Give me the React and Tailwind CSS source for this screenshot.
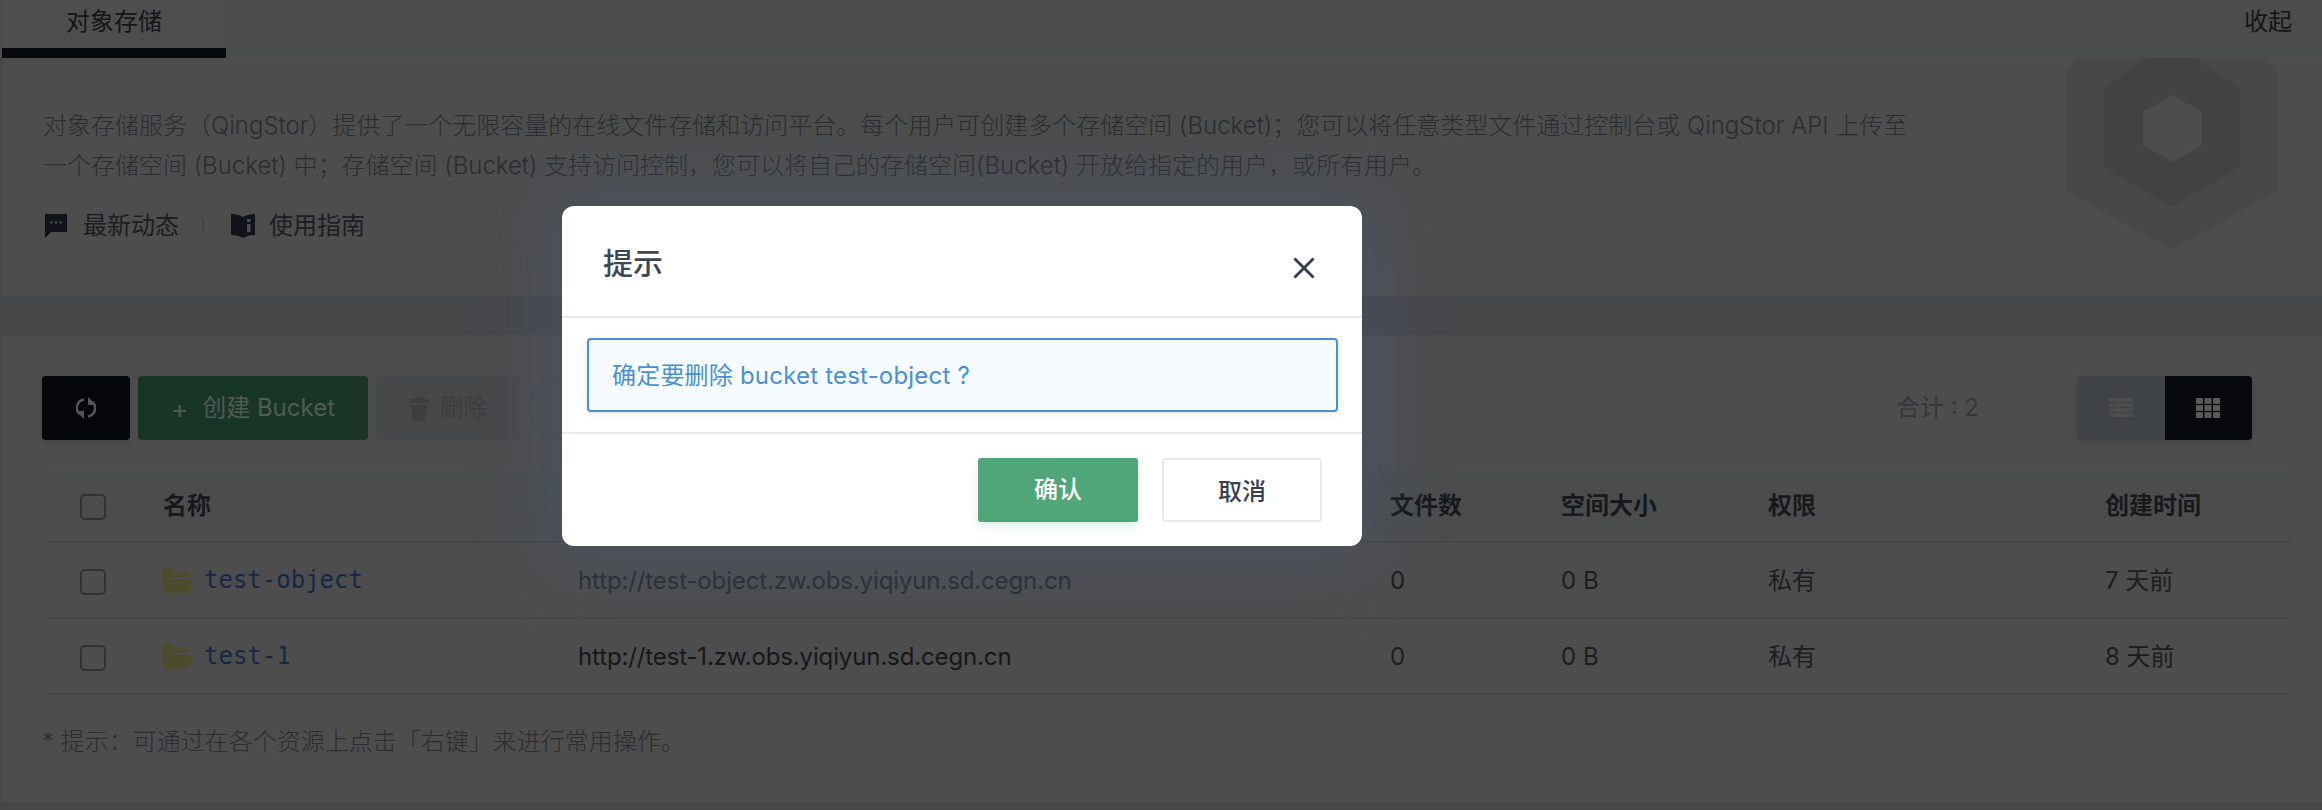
import React from 'react';

const FONT = "font-['Inter','Noto_Sans_CJK_SC',sans-serif]";

const buckets = [
  { name: 'test-object', url: 'http://test-object.zw.obs.yiqiyun.sd.cegn.cn', urlColor: 'text-[#282e34]', created: '7 天前' },
  { name: 'test-1', url: 'http://test-1.zw.obs.yiqiyun.sd.cegn.cn', urlColor: 'text-[#15181c]', created: '8 天前' },
];

const COLS = 'grid grid-cols-[121px_415px_812px_171px_207px_337px_187px] items-center';

const Checkbox = () => (
  <span className="block w-[26px] h-[26px] rounded-[5px] border-2 border-[#333335]" />
);

const FolderIcon = () => (
  <svg width="32" height="25" viewBox="0 0 32 25" className="shrink-0 -ml-[1px]">
    <path d="M0 3a3 3 0 0 1 3-3h6l3 4h12a3 3 0 0 1 3 3v2H9a5 5 0 0 0-4.600 3L0 21z" fill="#4c4b2e" />
    <path d="M8 11h22.500c1 0 1.700 1 1.200 2l-5 10a3 3 0 0 1-2.700 2H2a1.300 1.300 0 0 1-1.200-1.800L5.500 13A3 3 0 0 1 8 11z" fill="#4c4b2e" />
  </svg>
);

const LogoMark = () => (
  <svg width="213" height="192" viewBox="0 0 213 192" className="absolute right-[44px] top-0">
    <path d="M12 0h189l12 14v118l-106.500 60L0 132V14z" fill="#484848" />
    <path d="M82 0h49l44 30v79l-68.500 40L39 109V30z" fill="#434343" />
    <path d="M107.500 37l29.500 17v33l-29.500 17-29.500-17V54z" fill="#4d4d4d" />
  </svg>
);

const RowCell = ({ children, className = '' }) => (
  <div className={`text-[24px] leading-[32px] ${className}`}>{children}</div>
);

const App = () => {
  return (
    <div className={`relative h-[810px] w-full overflow-hidden bg-[#464749] ${FONT}`}>
      {/* tabs */}
      <div className="h-[58px] flex justify-between bg-[#4b4c4c] pr-[30px] pl-[2px]">
        <div className="w-[224px] h-full bg-[#4d4e4e] border-b-[10px] border-[#07090d] text-center text-[24px] leading-[44px] text-[#141619]">
          对象存储
        </div>
        <div className="text-[24px] leading-[44px] text-[#141619]">收起</div>
      </div>

      {/* intro */}
      <div className="relative ml-[2px] h-[238px] bg-[#4d4d4d] overflow-hidden pl-[41px] pt-[48px]">
        <LogoMark />
        <p className="relative text-[24px] leading-[40px] font-light text-[#2b2e31] w-[1900px]">
          对象存储服务（QingStor）提供了一个无限容量的在线文件存储和访问平台。每个用户可创建多个存储空间 (Bucket)；您可以将任意类型文件通过控制台或 QingStor API 上传至
          <br />
          一个存储空间 (Bucket) 中；存储空间 (Bucket) 支持访问控制，您可以将自己的存储空间(Bucket) 开放给指定的用户，或所有用户。
        </p>
        <div className="flex items-center mt-[20px] h-[40px] text-[24px] text-[#1b1e22]">
          <svg width="22" height="24" viewBox="0 0 22 24" className="ml-[2px]" fill="#10141a">
            <path d="M0 0h22v18H6l-6 6z" />
            <circle cx="6.500" cy="8.500" r="1.200" fill="#4d4d4d" />
            <circle cx="11" cy="8.500" r="1.200" fill="#4d4d4d" />
            <circle cx="15.500" cy="8.500" r="1.200" fill="#4d4d4d" />
          </svg>
          <span className="ml-[16px]">最新动态</span>
          <span className="ml-[23px] w-[2px] h-[15px] bg-[#434343]" />
          <svg width="24" height="24" viewBox="0 0 24 24" className="ml-[27px]" fill="#10141a">
            <path d="M0 0c5 0 9 1 12 3c3-2 7-3 12-3v21c-5 0-9 1-12 3c-3-2-7-3-12-3z" />
            <rect x="16" y="5" width="3.500" height="3" fill="#4d4d4d" />
            <rect x="16" y="10" width="3.500" height="8" fill="#4d4d4d" />
          </svg>
          <span className="ml-[14px]">使用指南</span>
        </div>
      </div>

      {/* bucket list */}
      <div className="ml-[2px] mt-[39px] h-[467px] bg-[#4d4d4d] pl-[40px] pr-[30px] pt-[41px]">
        <div className="flex items-center h-[64px]">
          <button className="w-[88px] h-full rounded-[4px] bg-[#05070b] flex items-center justify-center shadow-[0_2px_6px_rgba(0,0,0,.15)]">
            <svg width="20" height="24" viewBox="0 0 20 24" fill="none" stroke="#555555" strokeWidth="2.500">
              <path d="M8 3.500A8.500 8.500 0 0 0 3.500 18" />
              <path d="M12 20.500A8.500 8.500 0 0 0 16.500 6" />
              <path d="M0 15h8v8zM20 9h-8V1z" fill="#555555" stroke="none" />
            </svg>
          </button>
          <button className="ml-[8px] w-[230px] h-full rounded-[4px] bg-[#193526] text-[24px] text-[#4f5a55] flex items-center justify-center">
            <span className="mr-[14px] text-[26px]">+</span>创建 Bucket
          </button>
          <button className="ml-[8px] w-[144px] h-full rounded-[4px] bg-[#474849] text-[24px] text-[#3c3e40] flex items-center justify-center">
            <svg width="20" height="26" viewBox="0 0 20 26" fill="#3c3e40" className="mr-[11px]">
              <path d="M0 6c0-2 4-3 7-3 0-2 6-2 6 0 3 0 7 1 7 3v2H0zM2 10h16l-1.500 14a2 2 0 0 1-2 2h-9a2 2 0 0 1-2-2z" />
            </svg>
            删除
          </button>
          <div className="ml-[8px] w-[300px] h-full rounded-full border-2 border-[#454a50]" />
          <div className="ml-auto text-[24px] text-[#34373a]">合计 : 2</div>
          <div className="ml-[98px] mr-[40px] flex h-full w-[175px] rounded-[4px] overflow-hidden shadow-[0_2px_6px_rgba(0,0,0,.12)]">
            <div className="flex-1 bg-[#3f4346] flex items-center justify-center">
              <svg width="24" height="20" viewBox="0 0 24 20" fill="#4d4d4d">
                {[0, 5, 10, 15].map((y) => (
                  <g key={y}>
                    <rect x="0" y={y} width="4" height="4" />
                    <rect x="5" y={y} width="19" height="4" />
                  </g>
                ))}
              </svg>
            </div>
            <div className="flex-1 bg-[#07090d] flex items-center justify-center">
              <svg width="24" height="20" viewBox="0 0 24 20" fill="#5a5a5a">
                {[0, 7, 14].map((y) =>
                  [0, 8.500, 17].map((x) => <rect key={`${x}-${y}`} x={x} y={y} width="7" height="6" rx="1" />)
                )}
              </svg>
            </div>
          </div>
        </div>

        {/* table */}
        <div className="mt-[30px]">
          <div className={`${COLS} h-[73px] bg-[#4b4d4d] border-b-2 border-[#464849]`}>
            <div className="pl-[38px] pt-[2px]"><Checkbox /></div>
            <RowCell className="font-semibold text-[#17191d]">名称</RowCell>
            <div />
            <RowCell className="font-semibold text-[#17191d]">文件数</RowCell>
            <RowCell className="font-semibold text-[#17191d]">空间大小</RowCell>
            <RowCell className="font-semibold text-[#17191d]">权限</RowCell>
            <RowCell className="font-semibold text-[#17191d]">创建时间</RowCell>
          </div>
          {buckets.map((b) => (
            <div key={b.name} className={`${COLS} h-[76px] border-b-2 border-[#464849]`}>
              <div className="pl-[38px] pt-[4px]"><Checkbox /></div>
              <div className="flex items-center gap-[10px]">
                <FolderIcon />
                <span className="font-['DejaVu_Sans_Mono',monospace] text-[24px] text-[#162848]">{b.name}</span>
              </div>
              <RowCell className={`pt-[2px] tracking-[-0.13px] ${b.urlColor}`}>{b.url}</RowCell>
              <RowCell className="pt-[2px] text-[#1b1e22]">0</RowCell>
              <RowCell className="pt-[2px] text-[#1b1e22]">0 B</RowCell>
              <RowCell className="pt-[2px] text-[#1b1e22]">私有</RowCell>
              <RowCell className="pt-[2px] text-[#1b1e22]">{b.created}</RowCell>
            </div>
          ))}
        </div>
        <p className="mt-[31px] text-[24px] leading-[32px] font-light text-[#2b2e31]">* 提示：可通过在各个资源上点击「右键」来进行常用操作。</p>
      </div>

      {/* confirm dialog */}
      <div className="absolute left-[562px] top-[206px] w-[800px] h-[340px] bg-white rounded-[12px] flex flex-col shadow-[0_0_70px_20px_rgba(75,100,135,.3)]">
        <div className="relative h-[112px] shrink-0 border-b-2 border-[#e6ebf0] pl-[41px] pt-[36px] text-[30px] leading-[42px] font-medium text-[#3d4753]">
          提示
          <svg width="22" height="22" viewBox="0 0 22 22" className="absolute right-[47px] top-[51px]" stroke="#36404c" strokeWidth="3" fill="none">
            <path d="M1.500 1.500l19 19M20.500 1.500l-19 19" />
          </svg>
        </div>
        <div className="h-[116px] shrink-0 border-b-2 border-[#e6ebf0] pl-[25px] pr-[24px] pt-[20px]">
          <div className="h-[74px] rounded-[4px] border-2 border-[#4a90d2] bg-[#f6fbff] pl-[23px] pt-[2px] flex items-center text-[24px] tracking-[0.2px] text-[#4a90d2] shadow-[0_2px_6px_rgba(0,0,0,.1)]">
            确定要删除 bucket test-object ?
          </div>
        </div>
        <div className="flex justify-end gap-[24px] pr-[40px] pt-[24px]">
          <button className="w-[160px] h-[64px] rounded-[3px] bg-[#4fa678] text-white text-[24px] font-medium shadow-[0_4px_10px_rgba(79,166,120,.2)]">确认</button>
          <button className="w-[160px] h-[64px] rounded-[3px] bg-white border-2 border-[#e6ebf0] pt-[3px] text-[#36404c] text-[24px] font-medium">取消</button>
        </div>
      </div>
    </div>
  );
};

export default App;
